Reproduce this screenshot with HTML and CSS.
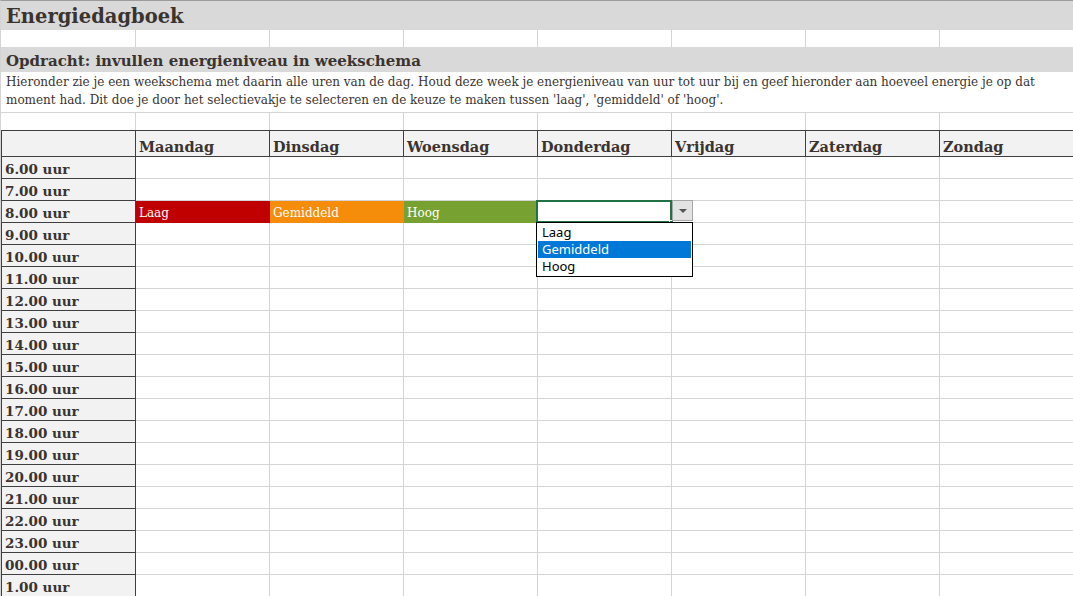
FILE: index.html
```html
<!DOCTYPE html>
<html lang="nl">
<head>
    <meta charset="UTF-8">
    <meta name="viewport" content="width=device-width, initial-scale=1.0">
    <title>Energiedagboek</title>
    <link rel="stylesheet" href="styles.css">
</head>
<body>
    <div class="sheet">
        <div class="col-marker"></div>

        <div class="band title-row"><h1>Energiedagboek</h1></div>
        <div class="row spacer"><div></div><div></div><div></div><div></div><div></div><div></div><div></div><div></div></div>
        <div class="band subtitle-row"><h2>Opdracht: invullen energieniveau in weekschema</h2></div>
        <div class="intro">
            <p>Hieronder zie je een weekschema met daarin alle uren van de dag. Houd deze week je energieniveau van uur tot uur bij en geef hieronder aan hoeveel energie je op dat<br>moment had. Dit doe je door het selectievakje te selecteren en de keuze te maken tussen 'laag', 'gemiddeld' of 'hoog'.</p>
        </div>
        <div class="row spacer"><div></div><div></div><div></div><div></div><div></div><div></div><div></div><div></div></div>

        <div class="row head-row">
            <div class="corner"></div>
            <div>Maandag</div>
            <div>Dinsdag</div>
            <div>Woensdag</div>
            <div>Donderdag</div>
            <div>Vrijdag</div>
            <div>Zaterdag</div>
            <div>Zondag</div>
        </div>

        <div class="row hour-row"><div class="hour">6.00 uur</div><div></div><div></div><div></div><div></div><div></div><div></div><div></div></div>
        <div class="row hour-row"><div class="hour">7.00 uur</div><div></div><div></div><div></div><div></div><div></div><div></div><div></div></div>
        <div class="row hour-row">
            <div class="hour current">8.00 uur</div>
            <div class="level laag">Laag</div>
            <div class="level gemiddeld">Gemiddeld</div>
            <div class="level hoog">Hoog</div>
            <div class="active-cell">
                <span class="selection"></span>
                <span class="fill-handle"></span>
                <span class="drop-button"><span class="arrow"></span></span>
                <ul class="drop-list">
                    <li>Laag</li>
                    <li class="selected">Gemiddeld</li>
                    <li>Hoog</li>
                </ul>
            </div>
            <div></div><div></div><div></div>
        </div>
        <div class="row hour-row"><div class="hour">9.00 uur</div><div></div><div></div><div></div><div></div><div></div><div></div><div></div></div>
        <div class="row hour-row"><div class="hour">10.00 uur</div><div></div><div></div><div></div><div></div><div></div><div></div><div></div></div>
        <div class="row hour-row"><div class="hour">11.00 uur</div><div></div><div></div><div></div><div></div><div></div><div></div><div></div></div>
        <div class="row hour-row"><div class="hour">12.00 uur</div><div></div><div></div><div></div><div></div><div></div><div></div><div></div></div>
        <div class="row hour-row"><div class="hour">13.00 uur</div><div></div><div></div><div></div><div></div><div></div><div></div><div></div></div>
        <div class="row hour-row"><div class="hour">14.00 uur</div><div></div><div></div><div></div><div></div><div></div><div></div><div></div></div>
        <div class="row hour-row"><div class="hour">15.00 uur</div><div></div><div></div><div></div><div></div><div></div><div></div><div></div></div>
        <div class="row hour-row"><div class="hour">16.00 uur</div><div></div><div></div><div></div><div></div><div></div><div></div><div></div></div>
        <div class="row hour-row"><div class="hour">17.00 uur</div><div></div><div></div><div></div><div></div><div></div><div></div><div></div></div>
        <div class="row hour-row"><div class="hour">18.00 uur</div><div></div><div></div><div></div><div></div><div></div><div></div><div></div></div>
        <div class="row hour-row"><div class="hour">19.00 uur</div><div></div><div></div><div></div><div></div><div></div><div></div><div></div></div>
        <div class="row hour-row"><div class="hour">20.00 uur</div><div></div><div></div><div></div><div></div><div></div><div></div><div></div></div>
        <div class="row hour-row"><div class="hour">21.00 uur</div><div></div><div></div><div></div><div></div><div></div><div></div><div></div></div>
        <div class="row hour-row"><div class="hour">22.00 uur</div><div></div><div></div><div></div><div></div><div></div><div></div><div></div></div>
        <div class="row hour-row"><div class="hour">23.00 uur</div><div></div><div></div><div></div><div></div><div></div><div></div><div></div></div>
        <div class="row hour-row"><div class="hour">00.00 uur</div><div></div><div></div><div></div><div></div><div></div><div></div><div></div></div>
        <div class="row hour-row"><div class="hour">1.00 uur</div><div></div><div></div><div></div><div></div><div></div><div></div><div></div></div>
    </div>
</body>
</html>
```

FILE: styles.css
```css
* {
    box-sizing: border-box;
}

body {
    margin: 0;
    font-family: 'DejaVu Serif', 'Liberation Serif', serif;
    color: #3a3430;
    background: white;
    overflow: hidden;
}

.sheet {
    position: relative;
    width: 1073px;
    height: 596px;
    overflow: hidden;
    border-top: 1px solid #9c9c9c;
    border-left: 1px solid #d4d4d4;
}

.col-marker {
    position: absolute;
    top: -1px;
    left: 536px;
    width: 135px;
    height: 1px;
    background: #217346;
}

.band {
    background: #d9d9d9;
    padding-left: 5px;
    display: flex;
    align-items: flex-end;
}

.band h1,
.band h2 {
    margin: 0;
    font-weight: bold;
}

.title-row {
    height: 29px;
}

.title-row h1 {
    font-size: 19.5px;
    line-height: 24px;
    padding-bottom: 1px;
}

.subtitle-row {
    height: 25px;
}

.subtitle-row h2 {
    font-size: 15px;
    line-height: 20px;
    padding-bottom: 1px;
}

.intro {
    height: 41px;
    border-bottom: 1px solid #d4d4d4;
    padding: 1px 0 0 5px;
}

.intro p {
    margin: 0;
    font-size: 12px;
    line-height: 18px;
    white-space: nowrap;
}

.row {
    display: grid;
    grid-template-columns: 135px repeat(7, 134px);
}

.row > div {
    border-right: 1px solid #d4d4d4;
    border-bottom: 1px solid #d4d4d4;
}

.spacer {
    height: 17px;
}

.spacer > div {
    border-bottom: none;
}

.head-row {
    height: 27px;
    background: #f2f2f2;
    border-top: 1px solid #3f3f3f;
}

.head-row > div {
    border-right-color: #3f3f3f;
    border-bottom-color: #3f3f3f;
    font-size: 14.5px;
    font-weight: bold;
    display: flex;
    align-items: flex-end;
    padding: 0 0 1px 3px;
}

.head-row > .corner {
    border-left: 1px solid #3f3f3f;
}

.hour-row {
    height: 22px;
}

.row > .hour {
    background: #f2f2f2;
    border-left: 1px solid #3f3f3f;
    border-right-color: #3f3f3f;
    border-bottom-color: #3f3f3f;
    font-size: 13.5px;
    font-weight: bold;
    display: flex;
    align-items: flex-end;
    padding: 0 0 1px 3px;
}

.row > .hour.current {
    border-left-color: #217346;
    box-shadow: -1px 0 0 #217346;
}

.level {
    color: white;
    font-size: 12px;
    display: flex;
    align-items: flex-end;
    padding: 0 0 3px 3px;
}

.row > .level {
    border-right: none;
    border-bottom: none;
}

.laag {
    background: #c00000;
}

.gemiddeld {
    background: #f58c0a;
}

.hoog {
    background: #77a130;
}

.active-cell {
    position: relative;
}

.selection {
    position: absolute;
    top: -1px;
    left: -2px;
    right: -1px;
    bottom: -1px;
    border: 2px solid #217346;
}

.fill-handle {
    position: absolute;
    right: -3px;
    bottom: -3px;
    width: 5px;
    height: 5px;
    background: #217346;
    border: 1px solid white;
}

.drop-button {
    position: absolute;
    top: -1px;
    left: 134px;
    width: 21px;
    height: 21px;
    background: #e3e3e3;
    border: 1px solid #a6a6a6;
    display: flex;
    align-items: center;
    justify-content: center;
    z-index: 2;
}

.arrow {
    width: 0;
    height: 0;
    border-left: 4px solid transparent;
    border-right: 4px solid transparent;
    border-top: 4px solid #555;
}

.drop-list {
    position: absolute;
    top: 21px;
    left: -2px;
    width: 157px;
    margin: 0;
    padding: 1px 0;
    list-style: none;
    background: white;
    border: 1px solid black;
    font-family: 'Noto Sans', 'Open Sans', sans-serif;
    font-size: 13px;
    color: black;
    z-index: 3;
}

.drop-list li {
    height: 17px;
    line-height: 17px;
    padding-left: 4px;
    margin: 0 1px;
}

.drop-list li.selected {
    background: #0078d7;
    color: white;
}
```
